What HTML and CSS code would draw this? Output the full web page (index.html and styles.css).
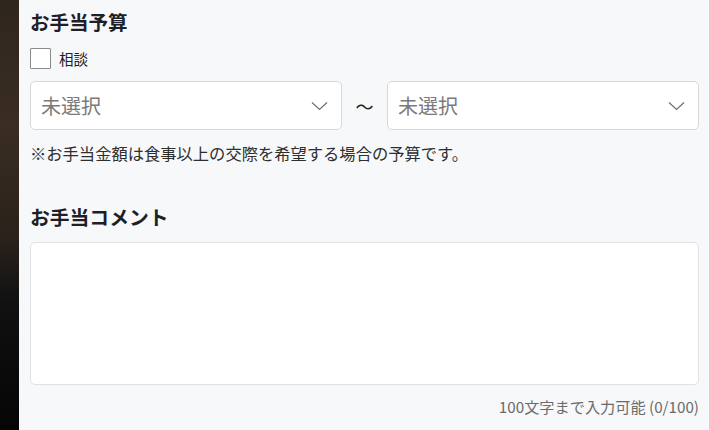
FILE: index.html
```html
<!DOCTYPE html>
<html lang="ja">
<head>
<meta charset="utf-8">
<link rel="stylesheet" href="styles.css">
</head>
<body>
<div class="page">
  <div class="photo"></div>
  <div class="panel">
    <h2 class="heading">お手当予算</h2>
    <label class="check">
      <span class="box"></span>
      <span class="check-label">相談</span>
    </label>
    <div class="range">
      <div class="select">
        <span class="placeholder">未選択</span>
        <svg class="chev" width="17" height="10" viewBox="0 0 17 10"><path d="M1 1.5 L8.5 8.5 L16 1.5" fill="none" stroke="#707070" stroke-width="1.2"/></svg>
      </div>
      <span class="tilde">～</span>
      <div class="select">
        <span class="placeholder">未選択</span>
        <svg class="chev" width="17" height="10" viewBox="0 0 17 10"><path d="M1 1.5 L8.5 8.5 L16 1.5" fill="none" stroke="#707070" stroke-width="1.2"/></svg>
      </div>
    </div>
    <p class="note">※お手当金額は食事以上の交際を希望する場合の予算です。</p>
    <h2 class="heading heading2">お手当コメント</h2>
    <div class="textarea"></div>
    <p class="counter">100文字まで入力可能 (0/100)</p>
  </div>
</div>
</body>
</html>
```

FILE: styles.css
```css
html, body {
  margin: 0;
  padding: 0;
}
body {
  font-family: "Noto Sans CJK JP", "Noto Sans", sans-serif;
  color: #1f2328;
  width: 709px;
  height: 430px;
  overflow: hidden;
}
.page {
  display: flex;
  height: 430px;
}
.photo {
  width: 19px;
  flex: none;
  background: linear-gradient(180deg, #2f261e 0%, #3a2d22 30%, #2a221b 55%, #111 70%, #050505 100%);
}
.panel {
  flex: 1;
  background: #f7f8fa;
  padding: 8px 10px 0 11px;
}
.heading {
  margin: 0;
  font-size: 19.5px;
  font-weight: 700;
  line-height: 28px;
  color: #1d2127;
}
.check {
  display: flex;
  align-items: center;
  gap: 8px;
  margin-top: 11px;
  height: 22px;
}
.box {
  width: 21px;
  height: 21px;
  box-sizing: border-box;
  border: 1.5px solid #8a8a8a;
  background: #fff;
  border-radius: 1px;
}
.check-label {
  font-size: 14.5px;
  color: #222;
}
.range {
  display: flex;
  align-items: center;
  margin-top: 12px;
}
.select {
  flex: 1;
  height: 49px;
  box-sizing: border-box;
  border: 1px solid #d6d8dc;
  border-radius: 5px;
  background: #fff;
  display: flex;
  align-items: center;
  justify-content: space-between;
  padding: 0 13px 0 10px;
}
.placeholder {
  font-size: 20px;
  color: #7a7a7a;
}
.tilde {
  width: 45px;
  text-align: center;
  font-size: 18px;
  color: #222;
}
.note {
  margin: 12px 0 0;
  font-size: 16.3px;
  line-height: 22px;
  color: #2e2e2e;
}
.heading2 {
  margin-top: 39px;
  font-size: 19.8px;
}
.textarea {
  margin-top: 11px;
  height: 143px;
  box-sizing: border-box;
  border: 1px solid #dfe1e5;
  border-radius: 5px;
  background: #fff;
}
.counter {
  margin: 10px 0 0;
  text-align: right;
  font-size: 15.2px;
  color: #6b6b6b;
  line-height: 22px;
}
```
